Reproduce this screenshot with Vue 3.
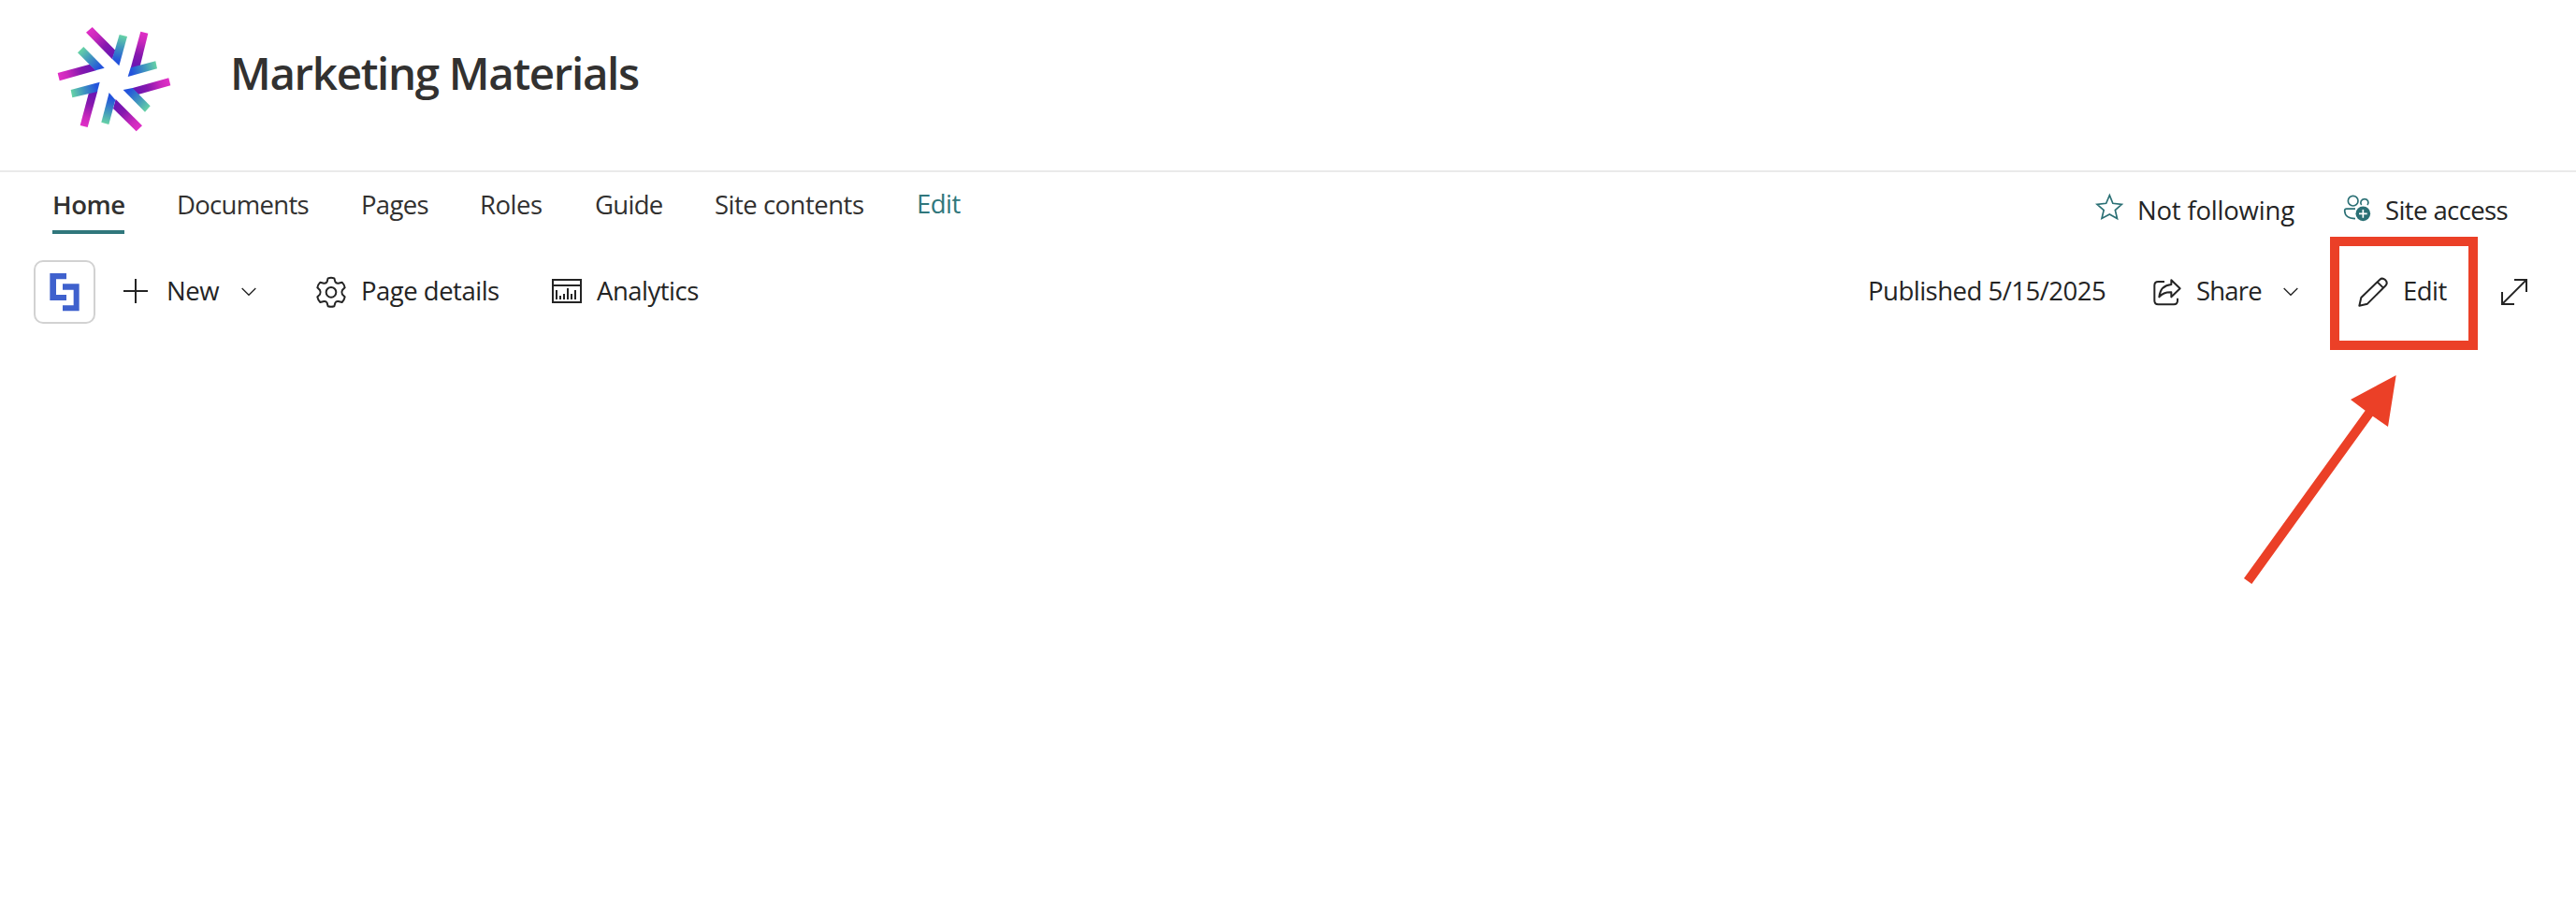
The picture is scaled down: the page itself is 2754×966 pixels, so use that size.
<script setup>
const navItems = [
  { id: 'home', label: 'Home', active: true },
  { id: 'documents', label: 'Documents' },
  { id: 'pages', label: 'Pages' },
  { id: 'roles', label: 'Roles' },
  { id: 'guide', label: 'Guide' },
  { id: 'contents', label: 'Site contents' },
  { id: 'edit', label: 'Edit' },
]

// each arm: long purple bar + short teal bar, gradient runs from tip to root
const arms = [
  { bar: '156,74 176,57 250,131 240,160', from: [166, 65], to: [246, 146], tip: '263,81 288,87 262,181 240,159', tipFrom: [275, 84], tipTo: [255, 165] },
  { bar: '331,71 355,77 328,187 299,188', from: [343, 74], to: [314, 185], tip: '379,166 384,190 290,216 299,187', tipFrom: [382, 178], tipTo: [303, 202] },
  { bar: '421,220 427,244 323,273 303,253', from: [424, 232], to: [313, 262], tip: '275,258 305,252 362,310 345,329', tipFrom: [353, 320], tipTo: [292, 262] },
  { bar: '317,391 336,373 251,288 243,318', from: [327, 382], to: [247, 302], tip: '205,362 229,369 250,290 230,267', tipFrom: [217, 366], tipTo: [238, 285] },
  { bar: '137,372 161,378 193,262 165,267', from: [149, 375], to: [179, 264], tip: '107,258 112,283 192,264 200,233', tipFrom: [110, 270], tipTo: [189, 248] },
  { bar: '65,204 71,229 188,196 168,176', from: [68, 216], to: [178, 186], tip: '129,139 148,120 215,188 186,196', tipFrom: [139, 130], tipTo: [199, 188] },
]
</script>

<template>
  <div class="page">
    <header class="site-header">
      <svg class="logo" viewBox="0 0 480 450">
        <defs>
          <template v-for="(arm, i) in arms" :key="i">
            <linearGradient :id="`bar${i}`" gradientUnits="userSpaceOnUse" :x1="arm.from[0]" :y1="arm.from[1]" :x2="arm.to[0]" :y2="arm.to[1]">
              <stop offset="0" stop-color="#e02fc6" />
              <stop offset="0.25" stop-color="#cb29bd" />
              <stop offset="0.65" stop-color="#8518ae" />
              <stop offset="1" stop-color="#6a16b4" />
            </linearGradient>
            <linearGradient :id="`tip${i}`" gradientUnits="userSpaceOnUse" :x1="arm.tipFrom[0]" :y1="arm.tipFrom[1]" :x2="arm.tipTo[0]" :y2="arm.tipTo[1]">
              <stop offset="0" stop-color="#66d2a6" />
              <stop offset="0.45" stop-color="#4299bd" />
              <stop offset="1" stop-color="#2353dc" />
            </linearGradient>
          </template>
        </defs>
        <g v-for="(arm, i) in arms" :key="i">
          <polygon :points="arm.bar" :fill="`url(#bar${i})`" />
          <polygon :points="arm.tip" :fill="`url(#tip${i})`" />
        </g>
      </svg>
      <h1 class="site-title">Marketing Materials</h1>
    </header>

    <div class="nav-row">
      <nav class="nav">
        <a v-for="item in navItems" :key="item.id" class="nav-item" :class="[item.id, { active: item.active }]">{{ item.label }}</a>
      </nav>
      <div class="site-actions">
        <svg class="star" viewBox="0 0 90 90" fill="none">
          <path d="M46 8 L56.500 34 L85 37 L64 55.500 L70.500 82.500 L46 69 L21 82.500 L27.500 55.500 L6 37 L35 34 Z" stroke="#2b7075" stroke-width="5" />
        </svg>
        <span class="following">Not following</span>
        <svg class="people" viewBox="0 0 90 90" fill="none" stroke="#2b7075" stroke-width="5">
          <circle cx="32" cy="20" r="16" />
          <path d="M59 33 C53 25 58 14 69 14 C80 14 84 25 78 33" />
          <path d="M39 45.500 H11 Q5 45.500 5 52 Q6 77 39 77" />
          <circle cx="64" cy="61" r="23.500" fill="#2b7075" stroke="none" />
          <path d="M64 48 V74 M51 61 H77" stroke="#fff" stroke-width="5" />
        </svg>
        <span class="access">Site access</span>
      </div>
    </div>

    <div class="command-bar">
      <div class="app-chip">
        <svg viewBox="0 0 96 122">
          <path d="M1 0 H54 V19 H21 V69 H54 V87 H1 Z" fill="#3f61cd" />
          <path d="M42 34 H95 V121 H42 V103 H77 V53 H42 Z" fill="#3f61cd" />
        </svg>
      </div>

      <svg class="plus" viewBox="0 0 78 78" fill="none" stroke="#242424" stroke-width="6">
        <path d="M39 0 V78 M0 39 H78" />
      </svg>
      <span class="new">New</span>
      <svg class="chevron" viewBox="0 0 48 30" fill="none" stroke="#242424" stroke-width="4">
        <path d="M2 3 L24 25 L46 3" />
      </svg>

      <svg class="gear" viewBox="0 0 96 98" fill="none" stroke="#242424" stroke-width="6" stroke-linejoin="round">
        <path d="M38 4 Q48 1 58 4 L61 15 Q64 21 71 20 L83 17 Q90 24 92 34 L84 42 Q80 49 84 56 L92 64 Q90 74 83 81 L71 78 Q64 77 61 83 L58 94 Q48 97 38 94 L35 83 Q32 77 25 78 L13 81 Q6 74 4 64 L12 56 Q16 49 12 42 L4 34 Q6 24 13 17 L25 20 Q32 21 35 15 Z" />
        <circle cx="48" cy="49" r="16" />
      </svg>
      <span class="details">Page details</span>

      <svg class="chart" viewBox="0 0 96 78" fill="none" stroke="#242424" stroke-width="6">
        <path d="M3 3 H93 V75 H3 Z M3 21 H93" />
        <path d="M15 36 V66 M27 54 V66 M39 48 V66 M51 30 V66 M63 48 V66 M75 36 V66" />
      </svg>
      <span class="analytics">Analytics</span>

      <span class="published">Published 5/15/2025</span>

      <svg class="share" viewBox="0 0 90 86" fill="none" stroke="#242424" stroke-width="6" stroke-linejoin="round">
        <path d="M36 9 H16 Q4 9 4 21 V70 Q4 82 16 82 H66 Q78 82 78 70 V62" />
        <path d="M58 4 L86 31 L58 58 V43 Q33 42 19 58 Q23 21 58 18 Z" />
      </svg>
      <span class="share-label">Share</span>
      <svg class="chevron share-chevron" viewBox="0 0 48 30" fill="none" stroke="#242424" stroke-width="4">
        <path d="M2 3 L24 25 L46 3" />
      </svg>

      <svg class="pencil" viewBox="0 0 96 96" fill="none" stroke="#242424" stroke-width="6" stroke-linejoin="round">
        <path d="M4 92 L10 66 L70 8 C80 -1 99 14 89 27 L30 86 Z M62 16 L81 35" />
      </svg>
      <span class="edit-label">Edit</span>

      <svg class="expand" viewBox="0 0 84 84" fill="none" stroke="#242424" stroke-width="6">
        <path d="M42 3 H81 V42 M3 42 V81 H42" />
        <path d="M3 81 L81 3" stroke-width="5.500" />
      </svg>
    </div>

    <div class="highlight"></div>
    <svg class="arrow" viewBox="0 0 660 780">
      <polygon points="545,63 399,141 446,176 57,714 82,732 470,194 519,228" fill="#eb4027" />
    </svg>
  </div>
</template>

<style>
body {
  margin: 0;
  background: #fff;
}
</style>

<style scoped>
.page {
  position: relative;
  box-sizing: border-box;
  width: 2754px;
  height: 966px;
  overflow: hidden;
  background: #fff;
  color: #242424;
  font-family: "Segoe UI", "Open Sans", "Noto Sans", sans-serif;
  font-size: 27.5px;
  letter-spacing: -0.5px;
  line-height: 40px;
  white-space: nowrap;
}

svg {
  display: block;
  flex: none;
  overflow: visible;
}

.site-header {
  display: flex;
  align-items: flex-start;
  box-sizing: border-box;
  height: 184px;
  padding: 10px 0 0 40px;
  border-bottom: 2px solid #eaeaea;
}

.logo {
  width: 160px;
  height: 150px;
}

.site-title {
  margin: 38px 0 0 46px;
  color: #323130;
  font-size: 47.5px;
  font-weight: 600;
  letter-spacing: -1.35px;
  line-height: 60px;
}

.nav-row {
  display: flex;
  justify-content: space-between;
  box-sizing: border-box;
  height: 94px;
  padding: 15px 73px 0 56px;
}

.nav {
  display: flex;
  gap: 56px;
}

.nav-item {
  box-sizing: border-box;
  height: 51px;
  color: #323130;
}

.home {
  width: 77px;
}

.documents {
  width: 141px;
  letter-spacing: -0.7px;
}

.pages {
  width: 71px;
  letter-spacing: -0.7px;
}

.roles {
  width: 67px;
}

.guide {
  width: 72px;
  letter-spacing: -0.7px;
}

.contents {
  width: 160px;
}

.edit {
  width: 48px;
  margin-top: -1px;
  color: #30777c;
}

.active {
  border-bottom: 4px solid #30777c;
  font-weight: 600;
}

.site-actions {
  display: flex;
  align-items: flex-start;
  padding-top: 6px;
}

.star {
  width: 30px;
  height: 30px;
  margin: 1px 15px 0 0;
}

.following {
  width: 169px;
  letter-spacing: -0.2px;
}

.people {
  width: 30px;
  height: 30px;
  margin: 3px 15px 0 51px;
}

.access {
  width: 131px;
  letter-spacing: -0.6px;
}

.command-bar {
  display: flex;
  align-items: center;
  height: 68px;
  padding-left: 36px;
}

.command-bar span {
  flex: none;
  padding-bottom: 2px;
}

.app-chip {
  display: flex;
  align-items: center;
  justify-content: center;
  box-sizing: border-box;
  width: 66px;
  height: 68px;
  border: 2px solid #d2d2d2;
  border-radius: 10px;
}

.app-chip svg {
  width: 32px;
  height: 40.667px;
}

.plus {
  width: 26px;
  height: 26px;
  margin: 0 20px 2px 30px;
}

.new {
  width: 80px;
}

.chevron {
  width: 16px;
  height: 10px;
}

.gear {
  width: 32px;
  height: 32.667px;
  margin: 0 16px 0 64px;
}

.details {
  width: 204px;
}

.chart {
  width: 32px;
  height: 26px;
  margin: 0 16px 2px 0;
}

.analytics {
  width: 112px;
}

.published {
  width: 256px;
  margin-left: auto;
}

.share {
  width: 30px;
  height: 28.667px;
  margin: 0 16px 0 49px;
}

.share-label {
  width: 93px;
  letter-spacing: -0.8px;
}

.pencil {
  width: 32px;
  height: 32px;
  margin: 0 16px 0 64px;
}

.edit-label {
  width: 105px;
}

.expand {
  width: 28px;
  height: 28px;
  margin-right: 52px;
}

.highlight {
  position: absolute;
  top: 253px;
  left: 2491px;
  box-sizing: border-box;
  width: 158px;
  height: 121px;
  border: 10px solid #eb4027;
}

.arrow {
  position: absolute;
  top: 380px;
  left: 2380px;
  width: 220px;
  height: 260px;
}
</style>
